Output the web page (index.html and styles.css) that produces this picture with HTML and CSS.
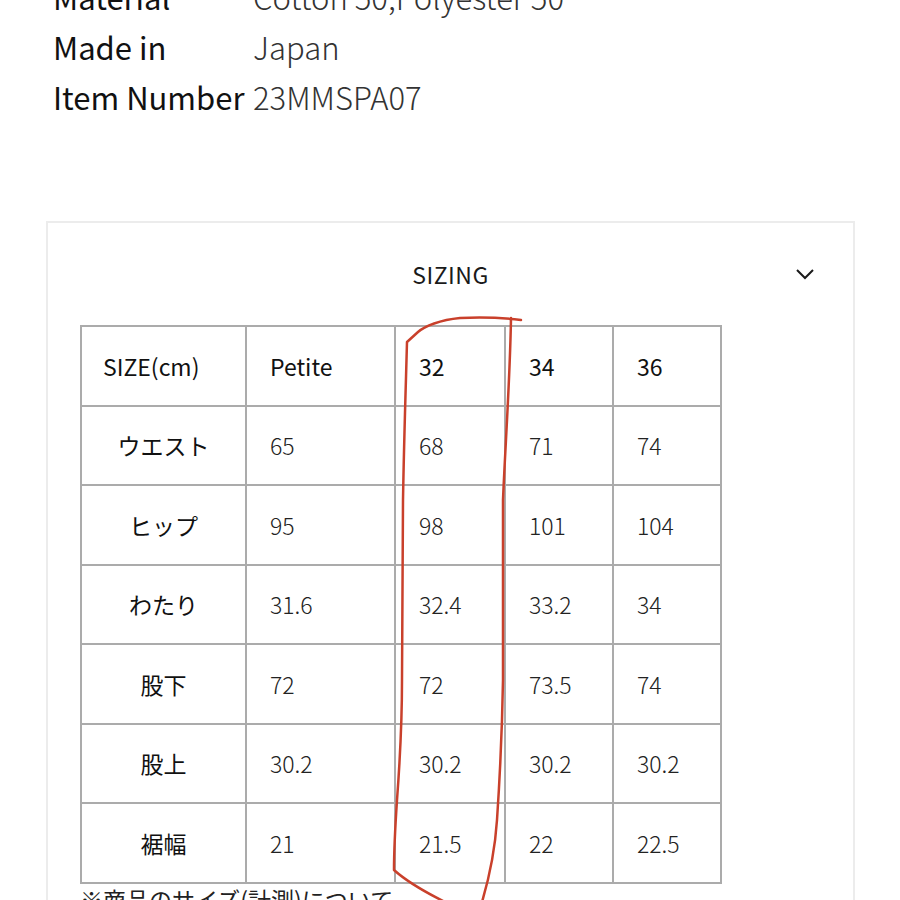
FILE: index.html
```html
<!DOCTYPE html>
<html lang="ja">
<head>
<meta charset="utf-8">
<link rel="stylesheet" href="styles.css">
</head>
<body>
<div class="page">
  <dl class="specs">
    <div class="spec"><dt>Material</dt><dd>Cotton 50,Polyester 50</dd></div>
    <div class="spec"><dt>Made in</dt><dd>Japan</dd></div>
    <div class="spec"><dt>Item Number</dt><dd>23MMSPA07</dd></div>
  </dl>

  <section class="sizing">
    <div class="sizing-head">
      <span class="sizing-title">SIZING</span>
      <svg class="chevron" width="20" height="12" viewBox="0 0 20 12"><path d="M2 2 L10 10 L18 2" fill="none" stroke="#1a1a1a" stroke-width="2"/></svg>
    </div>
    <div class="table-wrap">
      <table class="size-table">
        <colgroup>
          <col class="c1"><col class="c2"><col class="c3"><col class="c4"><col class="c5">
        </colgroup>
        <thead>
          <tr><th class="first">SIZE(cm)</th><th>Petite</th><th>32</th><th>34</th><th>36</th></tr>
        </thead>
        <tbody>
          <tr><td class="lbl">ウエスト</td><td>65</td><td>68</td><td>71</td><td>74</td></tr>
          <tr><td class="lbl">ヒップ</td><td>95</td><td>98</td><td>101</td><td>104</td></tr>
          <tr><td class="lbl">わたり</td><td>31.6</td><td>32.4</td><td>33.2</td><td>34</td></tr>
          <tr><td class="lbl">股下</td><td>72</td><td>72</td><td>73.5</td><td>74</td></tr>
          <tr><td class="lbl">股上</td><td>30.2</td><td>30.2</td><td>30.2</td><td>30.2</td></tr>
          <tr><td class="lbl">裾幅</td><td>21</td><td>21.5</td><td>22</td><td>22.5</td></tr>
        </tbody>
      </table>
      <p class="note">※商品のサイズ(計測)について</p>
    </div>
  </section>
  <svg class="markup" width="900" height="900" viewBox="0 0 900 900">
    <path d="M521 320 C505 318 480 317 460 318 C440 320 425 326 418 332 L407 342 C406 380 404 440 403 500 L402 680 C402 720 400 760 397 800 C395 830 394 855 394 870 C405 880 425 892 445 902" fill="none" stroke="#c9402b" stroke-width="2.5" stroke-linecap="round" stroke-linejoin="round"/>
    <path d="M511 318 C510 380 505 450 503 500 L503 680 C502 740 499 790 497 820 C495 850 490 875 482 902" fill="none" stroke="#c9402b" stroke-width="2.5" stroke-linecap="round"/>
  </svg>
</div>
</body>
</html>
```
FILE: styles.css
```css
html, body {
  margin: 0;
  padding: 0;
  background: #ffffff;
  overflow: hidden;
}
body {
  font-family: "Noto Sans CJK JP", "Noto Sans", sans-serif;
  color: #1a1a1a;
  width: 900px;
  height: 900px;
}
.page {
  position: relative;
  width: 900px;
  height: 900px;
  overflow: hidden;
}
.specs {
  margin: -28px 0 0 53px;
  padding: 0;
}
.spec {
  display: flex;
  height: 50px;
  line-height: 50px;
  font-size: 31px;
}
.spec dt {
  width: 200px;
  color: #111;
  white-space: nowrap;
}
.spec dd {
  margin: 0;
  color: #333;
  font-weight: 300;
}
.sizing {
  margin: 99px 0 0 46px;
  width: 805px;
  height: 700px;
  border: 2px solid #ececec;
  border-bottom: none;
}
.sizing-head {
  position: relative;
  display: flex;
  justify-content: center;
  align-items: center;
  height: 102px;
}
.sizing-title {
  font-size: 23px;
  letter-spacing: 0.5px;
  color: #1a1a1a;
  padding-bottom: 0;
}
.chevron {
  position: absolute;
  right: 38px;
  top: 45px;
}
.table-wrap {
  padding-left: 32px;
}
.size-table {
  border-collapse: collapse;
  font-size: 23px;
}
.c1 { width: 165px; }
.c2 { width: 149px; }
.c3 { width: 110px; }
.c4 { width: 108px; }
.c5 { width: 108px; }
.size-table th,
.size-table td {
  border: 2px solid #ababab;
  height: 79.5px;
  padding: 0 0 0 23px;
  text-align: left;
  vertical-align: middle;
  box-sizing: border-box;
}
.size-table th.first {
  padding-left: 21px;
}
.size-table th {
  font-weight: 400;
  color: #111;
}
.size-table td {
  font-weight: 300;
  color: #222;
}
.size-table td.lbl {
  text-align: center;
  padding: 0;
  font-weight: 400;
  color: #111;
}
.note {
  margin: 0;
  font-size: 23px;
  line-height: 30px;
  color: #222;
}
.markup {
  position: absolute;
  left: 0;
  top: 0;
  pointer-events: none;
}
```
